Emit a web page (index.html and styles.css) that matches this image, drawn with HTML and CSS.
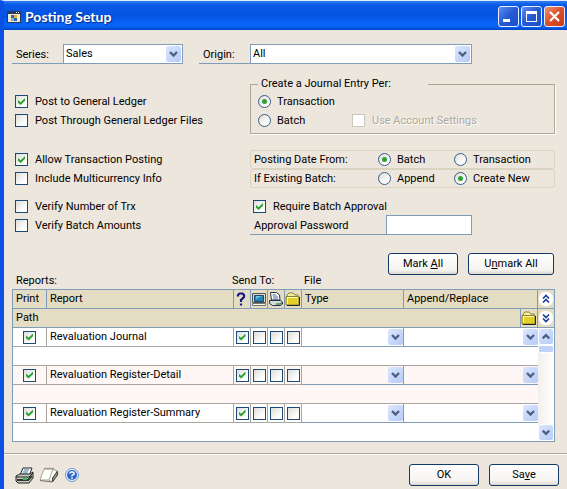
FILE: index.html
```html
<!DOCTYPE html>
<html lang="en">
<head>
<meta charset="utf-8">
<title>Posting Setup</title>
<link rel="stylesheet" href="styles.css">
</head>
<body>
<svg class="sprite" aria-hidden="true">
  <symbol id="chevron" viewBox="0 0 15 16"><path d="M4 6l3.500 3.500L11 6" fill="none" stroke="#4d6185" stroke-width="2.400"/></symbol>
  <symbol id="folder" viewBox="0 0 16 16"><path d="M2 6V4l2-2h4l2 2h3v2" fill="#f5ee9a" stroke="#8a8238"/><path d="M1 5.500h13V14H1z" fill="#e4cf28" stroke="#8a8238"/><path d="M2 6.500h11M2.500 7v6" stroke="#fffbb0"/><path d="M14.500 6v8.500H2" fill="none" stroke="#222"/></symbol>
</svg>
<div class="window">
  <header class="titlebar">
    <svg class="app-icon" width="14" height="12" viewBox="0 0 14 12" aria-hidden="true"><path d="M0 0h14v12H0z" fill="#26395e"/><path d="M1 3h12v8H1z" fill="#f1ead7"/><path d="M9 1h1v1H9zM11 1h1v1h-1z" fill="#fff"/><path d="M4 4h3v3H4z" fill="#2c62b8"/><path d="M7 7h3v3H7z" fill="#2c62b8"/><path d="M7 4h3v3H7z" fill="#e2b42c"/><path d="M4 7h3v3H4z" fill="#8bb4d8"/></svg>
    <h1>Posting Setup</h1>
    <div class="controls">
      <button type="button" class="ctl" aria-label="Minimize"><svg viewBox="0 0 19 19"><path d="M4 12h7v3H4z" fill="#fff"/></svg></button>
      <button type="button" class="ctl" aria-label="Maximize"><svg viewBox="0 0 19 19"><path d="M4 4h11v11H4zM5 7v7h9V7z" fill="#fff" fill-rule="evenodd"/></svg></button>
      <button type="button" class="ctl close" aria-label="Close"><svg viewBox="0 0 19 19"><path d="M5 5l9 9M14 5l-9 9" stroke="#fff" stroke-width="2.200"/></svg></button>
    </div>
  </header>

  <main>
    <div class="filters">
      <div class="field series"><label for="series">Series:</label><span class="combo"><select id="series"><option>Sales</option></select><svg class="arrow"><use href="#chevron"/></svg></span></div>
      <div class="field origin"><label for="origin">Origin:</label><span class="combo"><select id="origin"><option>All</option></select><svg class="arrow"><use href="#chevron"/></svg></span></div>
    </div>

    <div class="options entry">
      <div class="checks">
        <label class="choice"><input type="checkbox" checked>Post to General Ledger</label>
        <label class="choice"><input type="checkbox">Post Through General Ledger Files</label>
      </div>
      <fieldset class="journal">
        <legend>Create a Journal Entry Per:</legend>
        <label class="choice"><input type="radio" name="per" checked>Transaction</label>
        <div class="pair">
          <label class="choice"><input type="radio" name="per">Batch</label>
          <label class="choice disabled"><input type="checkbox" disabled>Use Account Settings</label>
        </div>
      </fieldset>
    </div>

    <div class="options dates">
      <div class="checks">
        <label class="choice"><input type="checkbox" checked>Allow Transaction Posting</label>
        <label class="choice"><input type="checkbox">Include Multicurrency Info</label>
      </div>
      <div>
        <div class="strip" role="radiogroup" aria-labelledby="date-from"><span id="date-from">Posting Date From:</span>
          <label class="choice"><input type="radio" name="date" checked>Batch</label>
          <label class="choice"><input type="radio" name="date">Transaction</label></div>
        <div class="strip" role="radiogroup" aria-labelledby="existing"><span id="existing">If Existing Batch:</span>
          <label class="choice"><input type="radio" name="existing">Append</label>
          <label class="choice"><input type="radio" name="existing" checked>Create New</label></div>
      </div>
    </div>

    <div class="options approval">
      <div class="checks">
        <label class="choice"><input type="checkbox">Verify Number of Trx</label>
        <label class="choice"><input type="checkbox">Verify Batch Amounts</label>
      </div>
      <div>
        <label class="choice require"><input type="checkbox" checked>Require Batch Approval</label>
        <div class="field password"><label for="password">Approval Password</label><input id="password" type="password"></div>
      </div>
    </div>

    <div class="marks">
      <button type="button" class="push">Mark <u>A</u>ll</button>
      <button type="button" class="push wide">U<u>n</u>mark All</button>
    </div>

    <div class="captions"><span>Reports:</span><span>Send To:</span><span>File</span></div>

    <div class="reports">
      <table>
        <colgroup><col class="c-print"><col><col class="c-send"><col class="c-send"><col class="c-send"><col class="c-send"><col class="c-type"><col class="c-append"><col class="c-folder"></colgroup>
        <thead>
          <tr>
            <th>Print</th><th>Report</th>
            <th class="icon"><svg viewBox="0 0 16 16" role="img" aria-label="Ask each time"><path d="M4 5.500V4l1.500-1.500h3L10 4v2L7 9v2M7 12.500v2" fill="none" stroke="#18188c" stroke-width="2.200"/></svg></th>
            <th class="icon"><svg viewBox="0 0 16 16" role="img" aria-label="Screen"><path d="M1.500 2.500h13v9h-13z" fill="#ddd9cf" stroke="#555"/><path d="M3.500 4.500h9v6h-9z" fill="#2387b5" stroke="#174a70"/><path d="M5 5h6L5 8z" fill="#66c5dc"/><path d="M1.500 12.500h13v2h-13z" fill="#f7f7ef" stroke="#77776d"/></svg></th>
            <th class="icon"><svg viewBox="0 0 16 16" role="img" aria-label="Printer"><path d="M3.500 9l-1-7.500h6l3 2.500.500 5z" fill="#fff" stroke="#26344a"/><path d="M4.500 4h4M5 6h5M5 8h5" stroke="#456990"/><path d="M1.500 9.500h11l2 1.500v2l-2 1.500h-8l-3-2z" fill="#d5dad5" stroke="#26344a"/><path d="M8 13h4l2-1" stroke="#4b8a61" stroke-width="1.500" fill="none"/></svg></th>
            <th class="icon"><svg role="img" aria-label="File"><use href="#folder"/></svg></th>
            <th>Type</th><th colspan="2">Append/Replace</th>
          </tr>
          <tr><th colspan="8">Path</th><th class="icon"><button type="button" class="bare" aria-label="Browse"><svg><use href="#folder"/></svg></button></th></tr>
        </thead>
        <tbody>
          <tr>
            <td class="tick"><input type="checkbox" checked aria-label="Print Revaluation Journal"></td><td>Revaluation Journal</td>
            <td class="tick"><input type="checkbox" checked aria-label="Ask"></td><td class="tick"><input type="checkbox" aria-label="Screen"></td><td class="tick"><input type="checkbox" aria-label="Printer"></td><td class="tick"><input type="checkbox" aria-label="File"></td>
            <td class="pick"><span class="combo"><select aria-label="Type"></select><svg class="arrow"><use href="#chevron"/></svg></span></td>
            <td class="pick" colspan="2"><span class="combo"><select aria-label="Append or replace"></select><svg class="arrow"><use href="#chevron"/></svg></span></td>
          </tr>
          <tr><td colspan="9" class="path"></td></tr>
        </tbody>
        <tbody class="alt">
          <tr>
            <td class="tick"><input type="checkbox" checked aria-label="Print Revaluation Register-Detail"></td><td>Revaluation Register-Detail</td>
            <td class="tick"><input type="checkbox" checked aria-label="Ask"></td><td class="tick"><input type="checkbox" aria-label="Screen"></td><td class="tick"><input type="checkbox" aria-label="Printer"></td><td class="tick"><input type="checkbox" aria-label="File"></td>
            <td class="pick"><span class="combo"><select aria-label="Type"></select><svg class="arrow"><use href="#chevron"/></svg></span></td>
            <td class="pick" colspan="2"><span class="combo"><select aria-label="Append or replace"></select><svg class="arrow"><use href="#chevron"/></svg></span></td>
          </tr>
          <tr><td colspan="9" class="path"></td></tr>
        </tbody>
        <tbody>
          <tr>
            <td class="tick"><input type="checkbox" checked aria-label="Print Revaluation Register-Summary"></td><td>Revaluation Register-Summary</td>
            <td class="tick"><input type="checkbox" checked aria-label="Ask"></td><td class="tick"><input type="checkbox" aria-label="Screen"></td><td class="tick"><input type="checkbox" aria-label="Printer"></td><td class="tick"><input type="checkbox" aria-label="File"></td>
            <td class="pick"><span class="combo"><select aria-label="Type"></select><svg class="arrow"><use href="#chevron"/></svg></span></td>
            <td class="pick" colspan="2"><span class="combo"><select aria-label="Append or replace"></select><svg class="arrow"><use href="#chevron"/></svg></span></td>
          </tr>
          <tr><td colspan="9" class="path"></td></tr>
        </tbody>
      </table>
      <div class="side">
        <button type="button" class="fold" aria-label="Hide details"><svg viewBox="0 0 16 18"><rect x="1" y="2" width="14" height="14" rx="6" fill="#fff"/><path d="M5 8.500l3-3 3 3M5 12.500l3-3 3 3" fill="none" stroke="#1c3f94" stroke-width="1.700"/></svg></button>
        <button type="button" class="fold" aria-label="Show details"><svg viewBox="0 0 16 18"><rect x="1" y="2" width="14" height="14" rx="6" fill="#fff"/><path d="M5 5.500l3 3 3-3M5 9.500l3 3 3-3" fill="none" stroke="#1c3f94" stroke-width="1.700"/></svg></button>
        <div class="scroll">
          <button type="button" class="step up" aria-label="Scroll up"><svg><use href="#chevron"/></svg></button>
          <div class="thumb"></div>
          <button type="button" class="step down" aria-label="Scroll down"><svg><use href="#chevron"/></svg></button>
        </div>
      </div>
    </div>
  </main>

  <footer>
    <button type="button" class="bare" aria-label="Print"><svg width="19" height="17" viewBox="0 0 19 17"><path d="M5 8l3-7h9l-3 8z" fill="#fff" stroke="#222"/><path d="M9 3h5M8 5h5M7 7h5" stroke="#3c6fa8"/><path d="M1 9l4-2h10l3-2v6l-4 5H3l-2-2z" fill="#c3c9bd" stroke="#222"/><path d="M1 10h13l4-4" fill="none" stroke="#222"/><path d="M2 13h11l4-4" fill="none" stroke="#30382f" stroke-width="2"/><path d="M8 12h4" stroke="#46b65a" stroke-width="2"/></svg></button>
    <button type="button" class="bare" aria-label="Note"><svg width="20" height="17" viewBox="0 0 20 17"><path d="M5 2h9l4 2-5 10-5 0z" fill="#fffffa"/><path d="M5 2h9l-4 11H1z" fill="#fffffa" stroke="#a3a39a"/><path d="M5 2l2-1 2 1 2-1 2 1 2-1" fill="none" stroke="#8c8c84"/><path d="M14 2l4 2M10 13l3 2" stroke="#8c8c84"/><path d="M18.500 4v4l-5 7v-4z" fill="#8f9688" stroke="#3c443c"/><path d="M1 13.500l12 1.500" stroke="#777"/></svg></button>
    <button type="button" class="bare" aria-label="Help"><svg width="16" height="16" viewBox="0 0 16 16"><circle cx="8" cy="8" r="6.500" fill="#eaf3ff" stroke="#6d97dc"/><circle cx="8" cy="8" r="5" fill="#3168c8"/><path d="M6 6.500V6l1-1h2l1 1v1L8 8.500V9.500M8 10.500v1.500" fill="none" stroke="#fff" stroke-width="1.500"/></svg></button>
    <div class="actions">
      <button type="button" class="push">OK</button>
      <button type="button" class="push">Sa<u>v</u>e</button>
    </div>
  </footer>
</div>
</body>
</html>
```
FILE: styles.css
```css
* { box-sizing: border-box; }
:root { --line: #7f9db9; --face: #ede6dd; --navy: #1c4a76; }
body { margin: 0; background: var(--face); font: 11px/14px Roboto, "Liberation Sans", sans-serif; color: #000; }
button, input, select { font: inherit; color: inherit; margin: 0; }
.sprite { display: none; }
svg { display: block; }

.window { min-height: 100vh; display: flex; flex-direction: column; border-left: 4px solid #0b50e4; border-top: 1px solid #dfe8f8; }
.titlebar { display: flex; align-items: center; height: 29px; padding: 2px 2px 0 3px; background: linear-gradient(#2a80f4 0, #0a58e6 4px, #0553e2 14px, #0866fa 24px, #0560f2 26px, #0342c2 29px); }
.app-icon { flex: none; }
h1 { flex: 1; margin: 0 0 0 4px; font: bold 14px/18px Lato, "Open Sans", sans-serif; color: #fff; text-shadow: 1px 1px 1px #0a2a80; }
.controls { display: flex; gap: 2px; }
.ctl { width: 21px; height: 21px; padding: 0; border: 1px solid #e8efff; border-radius: 3px; background: linear-gradient(135deg, #5e8eee, #2459d4 50%, #1c4fc8); }
.ctl.close { background: linear-gradient(135deg, #ee9474, #dc4e28 50%, #c83c18); }

main { padding: 14px 12px 11px 8px; }
.filters { display: flex; gap: 16px; height: 20px; }
.field { display: flex; align-items: center; height: 20px; border-bottom: 1px solid var(--line); }
.field > label { padding: 2px 0 0 4px; }
.field .combo { align-self: flex-end; height: 20px; margin-bottom: -1px; border: 1px solid var(--line); }
.series { flex: 171 1 0; max-width: 171px; }
.series > label, .origin > label { flex: 0 0 51px; }
.origin { flex: 273 1 0; max-width: 273px; }
.combo { position: relative; display: block; flex: 1; min-width: 0; background: #fff; }
.combo select { display: block; width: 100%; height: 100%; padding: 0 18px 0 2px; border: 0; background: none; appearance: none; }
.arrow { position: absolute; top: 1px; right: 1px; width: 15px; height: 16px; border-radius: 2px; background: linear-gradient(135deg, #dce6fd, #b6cbf8); pointer-events: none; }

.options { display: grid; grid-template-columns: 238px 1fr; }
.checks { padding-left: 3px; }
.choice { display: flex; align-items: center; gap: 7px; height: 19px; white-space: nowrap; }
.entry { margin-top: 13px; }
.entry .checks { padding-top: 15px; }
.dates { margin-top: 16px; }
.approval { margin-top: 9px; }

input[type="checkbox"], input[type="radio"] { appearance: none; display: grid; place-items: center; flex: none; width: 13px; height: 13px; border: 1px solid var(--navy); background: linear-gradient(135deg, #dcdcd8, #fff 75%); }
input[type="radio"] { border-radius: 50%; border-color: #335f88; }
input[type="checkbox"]:checked::before { content: ""; width: 7px; height: 7px; background: #2ea031; clip-path: polygon(0 28%, 38% 62%, 100% 0, 100% 40%, 38% 100%, 0 68%); }
input[type="radio"]:checked::before { content: ""; width: 5px; height: 5px; border-radius: 50%; background: #2ea031; }
input[type="checkbox"]:disabled { border-color: #cac8bb; background: #fff; }
.disabled { color: #aca899; text-shadow: 1px 1px 0 #fff; }

.journal { min-width: 0; margin: 0; padding: 1px 0 3px 7px; border: 1px solid #aca899; box-shadow: 1px 1px 0 #fff; }
.journal legend { width: 170px; padding: 0 0 0 3px; line-height: 14px; }
.journal .choice, .strip .choice { gap: 6px; }
.pair { display: grid; grid-template-columns: 94px 1fr; }
.pair .disabled { gap: 7px; }

.strip { display: grid; grid-template-columns: 124px 76px 1fr; align-items: center; height: 19px; padding-left: 3px; border: 1px solid #d9d3bf; border-radius: 3px; }
.strip .choice { height: 17px; }
.require { padding-left: 3px; }
.password { width: 222px; height: 19px; }
.password label { flex: 0 0 136px; }
.password input { flex: 1; min-width: 0; height: 20px; align-self: flex-end; margin-bottom: -1px; padding: 0 3px; border: 1px solid var(--line); background: #fff; }

.push { width: 70px; height: 22px; padding: 0; border: 1px solid #12396a; border-radius: 3px; background: linear-gradient(#fff, #f6f3f0 80%, #dcd5cc); text-align: center; line-height: 18px; }
.push.wide { width: 86px; }
.marks { display: flex; justify-content: flex-end; gap: 10px; margin-top: 18px; padding-right: 1px; }
.captions { display: grid; grid-template-columns: 1fr 72px 251px; padding-left: 4px; line-height: 12px; margin-bottom: 2px; }

.reports { display: flex; border: 1px solid var(--line); }
table { flex: 1; min-width: 0; table-layout: fixed; border-collapse: separate; border-spacing: 0; }
.c-print { width: 34px; }
.c-send { width: 17px; }
.c-type { width: 102px; }
.c-append { width: 117px; }
.c-folder { width: 17px; }
th, td { height: 19px; padding: 0 0 0 3px; border: solid var(--line); border-width: 0 1px 1px 0; text-align: left; font-weight: normal; line-height: 14px; white-space: nowrap; }
th { background: #e4dcc3; }
td { background: #fff; border-color: #aaa69f; }
.alt td { background: #fff6f6; }
td:last-child { border-right: 0; }
tbody:last-child tr:last-child td { border-bottom: 0; height: 18px; }
.icon, .tick { padding: 0; }
.icon svg { width: 16px; height: 16px; }
.tick input { margin: 0 auto; }
.pick { padding: 0; border-color: var(--line); }
.pick .combo { height: 18px; background: none; }
.pick .arrow { right: 0; }
.bare { display: block; padding: 0; border: 0; background: none; }

.side { flex: 0 0 16px; display: flex; flex-direction: column; }
.fold { height: 19px; padding: 0; border: 0; border-bottom: 1px solid var(--line); background: #e4dcc3; }
.fold svg { width: 16px; height: 18px; }
.scroll { flex: 1; display: flex; flex-direction: column; background: linear-gradient(90deg, #f2f0ec, #fff); }
.step { height: 17px; padding: 0; border: 1px solid #fff; border-radius: 3px; background: linear-gradient(135deg, #dce6fd, #b6cbf8); }
.step svg { width: 14px; height: 15px; }
.up svg { transform: rotate(180deg); }
.down { margin-top: auto; }
.thumb { height: 8px; border: 1px solid #fff; border-radius: 2px; background: #c1d2fa; }

footer { display: flex; align-items: flex-start; gap: 5px; flex: 1; padding: 10px 8px 2px 11px; border-top: 1px solid #aca899; box-shadow: inset 0 1px 0 #fff; }
footer .bare { margin-top: 3px; }
.actions { display: flex; gap: 10px; margin-left: auto; }
```
